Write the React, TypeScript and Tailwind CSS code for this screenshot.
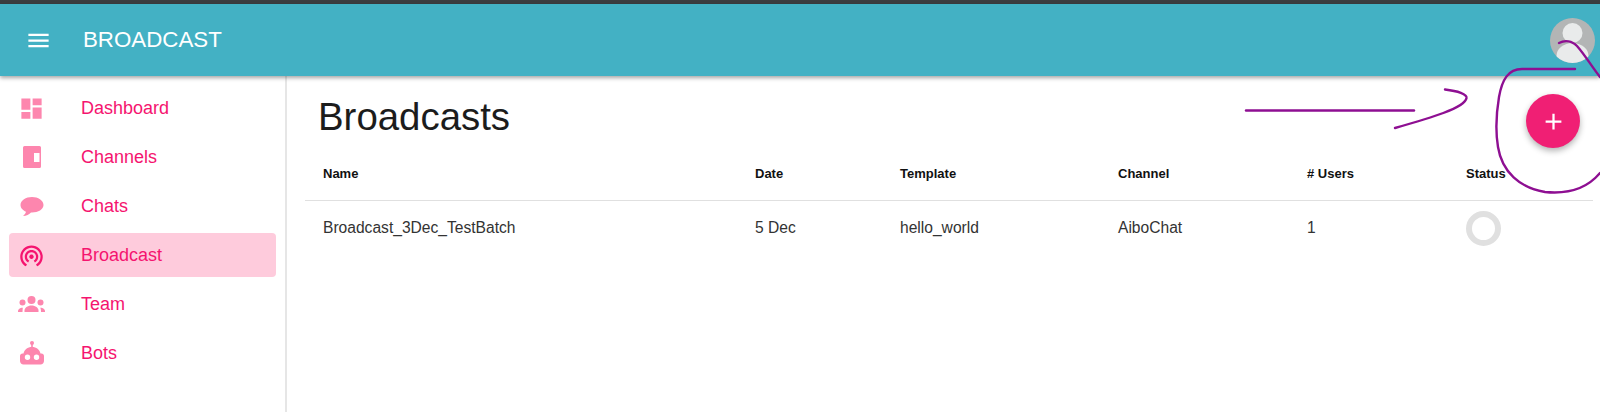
import React from 'react';
import { MdDashboard, MdWifiTethering, MdAdd, MdMenu } from 'react-icons/md';

const ChannelIcon = ({ className }: { className?: string }) => (
  <svg viewBox="0 0 18 22" className={className} fill="currentColor">
    <path fillRule="evenodd" d="M1.500 0h15A1.500 1.500 0 0 1 18 1.500v19a1.500 1.500 0 0 1-1.500 1.500h-15A1.500 1.500 0 0 1 0 20.500v-19A1.500 1.500 0 0 1 1.500 0zM11 7v9h5.500V7z" />
  </svg>
);

const ChatIcon = ({ className }: { className?: string }) => (
  <svg viewBox="0 0 24 24" className={className} fill="currentColor">
    <path d="M12 3C5.900 3 .5 6.400.5 11c0 3 2.500 5.500 5.500 6.800C5.600 19.500 4.500 21 3 22c3.200-.2 6.500-1.500 8-3.500h1c6.100 0 11.500-3 11.500-7.500S18.100 3 12 3z" />
  </svg>
);

const TeamIcon = ({ className }: { className?: string }) => (
  <svg viewBox="0 0 27 16" className={className} fill="currentColor">
    <circle cx="13.500" cy="4" r="4" />
    <circle cx="4.500" cy="6.500" r="3" />
    <circle cx="22.500" cy="6.500" r="3" />
    <path d="M6.500 16v-1.500c0-2.500 3-5 7-5s7 2.500 7 5V16z" />
    <path d="M0 16v-1c0-1.600 1.500-3 3.500-3.300h1.300C4.800 12.500 4.500 14 4.500 16z" />
    <path d="M27 16v-1c0-1.600-1.500-3-3.500-3.300h-1.300c.6.800.8 2.300.8 4.300z" />
  </svg>
);

const BotIcon = ({ className }: { className?: string }) => (
  <svg viewBox="0 0 26 24" className={className} fill="currentColor">
    <circle cx="13" cy="2" r="2" />
    <rect x="12.200" y="3" width="1.600" height="4" />
    <path fillRule="evenodd" d="M13 6c4.500 0 7.500 2.500 8.500 6.500h1c1.400 0 2.500 1.100 2.500 2.500v5c0 1.900-1.500 3.500-3.500 3.500h-17C2.500 23.500 1 21.900 1 20v-5c0-1.400 1.100-2.500 2.500-2.500h1C5.500 8.500 8.500 6 13 6zM8.500 13.500a2.700 2.700 0 1 0 0 5.400 2.700 2.700 0 0 0 0-5.400zm9 0a2.700 2.700 0 1 0 0 5.400 2.700 2.700 0 0 0 0-5.400z" />
  </svg>
);

const navItems = [
  { label: 'Dashboard', icon: <MdDashboard className="h-[27px] w-[27px]" /> },
  { label: 'Channels', icon: <ChannelIcon className="h-[22px] w-[18px]" /> },
  { label: 'Chats', icon: <ChatIcon className="h-[24px] w-[24px]" /> },
  { label: 'Broadcast', icon: <MdWifiTethering className="h-[27px] w-[27px]" />, active: true },
  { label: 'Team', icon: <TeamIcon className="h-[16px] w-[27px]" /> },
  { label: 'Bots', icon: <BotIcon className="h-[24px] w-[26px]" /> },
];

const columns = 'grid grid-cols-[432px_145px_218px_189px_159px_1fr] pl-[18px]';

const App = () => {
  return (
    <div className="relative flex h-[412px] w-[1600px] flex-col overflow-hidden bg-white font-['Liberation_Sans',sans-serif]">
      <div className="h-[4px] bg-[#3b3d40]" />

      {/* header */}
      <header className="z-10 flex h-[72px] items-center bg-[#43b1c4] pl-[25px] pr-[5px] text-white shadow-[0_2px_4px_rgba(0,0,0,0.35)]">
        <MdMenu className="h-[27px] w-[27px]" />
        <div className="ml-[31px] text-[22.300px]">BROADCAST</div>
        <div className="ml-auto h-[45px] w-[45px] overflow-hidden rounded-full bg-[#b3b5b5]">
          <svg viewBox="0 0 45 45" className="h-full w-full" fill="#e9ebeb">
            <circle cx="22.500" cy="15" r="10" />
            <ellipse cx="22.500" cy="38" rx="16" ry="13" />
          </svg>
        </div>
      </header>

      <div className="flex flex-1">
        {/* sidebar */}
        <nav className="flex w-[287px] flex-col gap-[5px] border-r-2 border-[#e6e6e6] pl-[9px] pr-[9px] pt-[10px]">
          {navItems.map((item) => (
            <div
              key={item.label}
              className={`flex h-[44px] items-center rounded-[4px] text-[18px] text-[#f5146f] ${item.active ? 'bg-[#fecbdc]' : ''}`}
            >
              <span className={`flex w-[45px] justify-center ${item.active ? 'text-[#f5146f]' : 'text-[#fd86ae]'}`}>
                {item.icon}
              </span>
              <span className="ml-[27px]">{item.label}</span>
            </div>
          ))}
        </nav>

        {/* content */}
        <main className="flex-1 pl-[18px] pr-[7px]">
          <div className="h-[71px] pl-[13px] pt-[22px] text-[38.400px] leading-[38px] text-[#1c1c1c]">
            Broadcasts
          </div>
          <div className={`${columns} h-[54px] items-center border-b border-[#e0e0e0] text-[13px] font-bold text-[#111]`}>
            <div>Name</div>
            <div>Date</div>
            <div>Template</div>
            <div>Channel</div>
            <div># Users</div>
            <div>Status</div>
          </div>
          <div className={`${columns} h-[54px] items-center text-[15.600px] text-[#333]`}>
            <div>Broadcast_3Dec_TestBatch</div>
            <div>5 Dec</div>
            <div>hello_world</div>
            <div>AiboChat</div>
            <div>1</div>
            <div className="h-[35px] w-[35px] rounded-full border-[6px] border-[#e0e0e0]" />
          </div>
        </main>
      </div>

      {/* add button */}
      <button className="absolute left-[1526px] top-[94px] flex h-[54px] w-[54px] items-center justify-center rounded-full bg-[#f01f74] text-white shadow-[0_3px_6px_rgba(0,0,0,0.3)]">
        <MdAdd className="h-[27px] w-[27px]" />
      </button>

      {/* hand-drawn annotation on top of the screenshot */}
      <svg viewBox="0 0 1600 412" className="pointer-events-none absolute inset-0 z-20 h-[412px] w-[1600px]" fill="none" stroke="#8e0f92" strokeWidth="2.400" strokeLinecap="round">
        <path d="M1246 110.500H1414" />
        <path d="M1445 89.500C1458 91 1467 94 1466.500 98C1465 108 1430 118 1395 128" />
        <path d="M1575 69H1522C1508 69 1502 80 1499 97C1496 115 1496 135 1498 147C1502 172 1520 188 1545 192C1565 194 1585 191 1600 173" />
        <path d="M1559 43C1565 40 1572 41 1577 46C1585 55 1592 67 1600 77" />
      </svg>
    </div>
  );
};

export default App;
